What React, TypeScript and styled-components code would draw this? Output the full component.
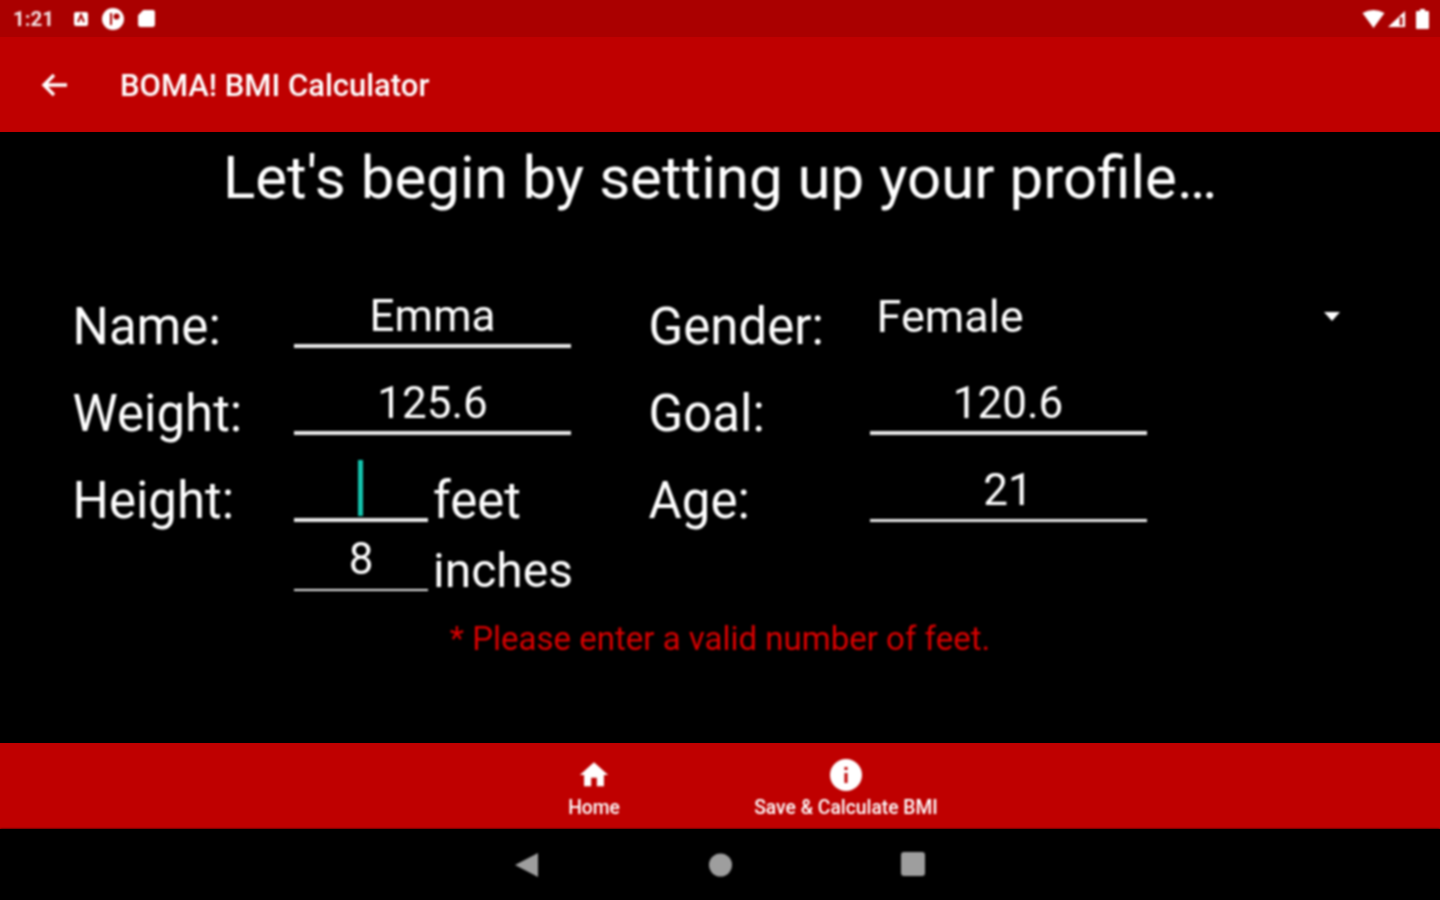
import React from "react";
import styled, { createGlobalStyle, css } from "styled-components";

const Global = createGlobalStyle`
  html, body { margin: 0; padding: 0; background: #000; }
  #root { width: 1440px; height: 900px; overflow: hidden; }
`;

const soft = css`
  filter: blur(0.8px);
`;

const Screen = styled.div`
  width: 1440px;
  height: 900px;
  display: flex;
  flex-direction: column;
  background: #000;
  color: #fff;
  font-family: Roboto, "Liberation Sans", sans-serif;
`;

const StatusBar = styled.div`
  height: 37px;
  background: #aa0000;
  display: flex;
  align-items: center;
  padding: 0 11px 0 13px;
  flex: none;
`;

const Clock = styled.span`
  ${soft}
  font-size: 20.5px;
  font-weight: 700;
  width: 60px;
  color: #f4e4e4;
`;

const StatusIcons = styled.div`
  ${soft}
  display: flex;
  align-items: center;
  gap: 12px;
`;

const Spacer = styled.div`
  flex: 1;
`;

const SystemIcons = styled.div`
  ${soft}
  display: flex;
  align-items: center;
  gap: 3px;
`;

const Battery = styled.svg`
  margin-left: 7px;
`;

const AppBar = styled.header`
  height: 95px;
  background: #bf0000;
  display: flex;
  align-items: center;
  padding-left: 40px;
  flex: none;
`;

const BackIcon = styled.svg`
  ${soft}
`;

const AppTitle = styled.h1`
  ${soft}
  margin: 2px 0 0 50px;
  font-size: 31px;
  font-weight: 500;
  color: #fff;
`;

const Content = styled.main`
  flex: 1;
  display: flex;
  flex-direction: column;
  min-height: 0;
`;

const Heading = styled.h2`
  ${soft}
  margin: 8px 0 0;
  height: 76px;
  line-height: 76px;
  text-align: center;
  font-size: 60px;
  font-weight: 400;
`;

const Form = styled.div`
  ${soft}
  margin: 62px 0 0 72.5px;
  display: grid;
  grid-template-columns: 221.5px 354.5px 221px 277px;
  grid-auto-rows: 87px;
`;

const Label = styled.div`
  font-size: 51px;
  line-height: 70px;
  height: 87px;
  padding-top: 14px;
  box-sizing: border-box;
`;

const Field = styled.div<{ $w: number; $line: number }>`
  width: ${(p) => p.$w}px;
  height: 70px;
  box-sizing: border-box;
  padding-top: 9px;
  border-bottom: ${(p) => p.$line}px solid #e8e8e8;
  text-align: center;
  font-size: 44px;
  line-height: 58px;
  position: relative;
  flex: none;
`;

const Caret = styled.span`
  position: absolute;
  left: 64px;
  bottom: 2px;
  width: 5px;
  height: 56px;
  background: #14c4ae;
`;

const HeightCell = styled.div`
  display: flex;
  flex-direction: column;
`;

const HeightRow = styled.div<{ $lift?: number }>`
  display: flex;
  align-items: flex-end;
  margin-top: ${(p) => -(p.$lift ?? 0)}px;
`;

const Unit = styled.span<{ $size: number; $drop: number }>`
  font-size: ${(p) => p.$size}px;
  line-height: 70px;
  margin-left: 5px;
  margin-bottom: ${(p) => -p.$drop}px;
`;

const Select = styled.div`
  width: 470px;
  height: 70px;
  display: flex;
  justify-content: space-between;
  align-items: flex-start;
  font-size: 45px;
  line-height: 60px;
  padding: 9px 0 0 7px;
  box-sizing: border-box;
`;

const Arrow = styled.span`
  width: 0;
  height: 0;
  margin: 25px 0 0;
  border-left: 8px solid transparent;
  border-right: 8px solid transparent;
  border-top: 9px solid #fff;
`;

const ErrorText = styled.p`
  ${soft}
  margin: 79px 0 0;
  text-align: center;
  color: #d80000;
  font-size: 33px;
  line-height: 42px;
`;

const BottomNav = styled.nav`
  height: 86px;
  background: #bf0000;
  display: flex;
  justify-content: center;
  flex: none;
`;

const NavItem = styled.div`
  ${soft}
  width: 252px;
  display: flex;
  flex-direction: column;
  align-items: center;
  padding-top: 15px;
  box-sizing: border-box;
`;

const NavLabel = styled.span`
  font-size: 19.3px;
  font-weight: 500;
  margin-top: 5px;
  line-height: 22px;
  white-space: nowrap;
`;

const SystemBar = styled.div`
  ${soft}
  height: 71px;
  background: #000;
  display: flex;
  align-items: center;
  justify-content: center;
  gap: 167px;
  flex: none;
`;

export default function App() {
  return (
    <Screen>
      <Global />
      <StatusBar>
        <Clock>1:21</Clock>
        <StatusIcons>
          <svg width="16" height="16" viewBox="0 0 16 16">
            <rect x="1" y="1" width="14" height="14" rx="2" fill="#fff" />
            <path d="M5 11 L8 4 L11 11" fill="none" stroke="#aa0000" strokeWidth="2" />
          </svg>
          <svg width="24" height="24" viewBox="0 0 24 24">
            <circle cx="12" cy="12" r="11" fill="#fff" />
            <rect x="9" y="6" width="2" height="12" fill="#aa0000" />
            <circle cx="15.5" cy="9.5" r="3" fill="#aa0000" />
          </svg>
          <svg width="19" height="19" viewBox="0 0 18 18">
            <path d="M6 1 H15 a2 2 0 0 1 2 2 V15 a2 2 0 0 1 -2 2 H3 a2 2 0 0 1 -2 -2 V6 Z" fill="#fff" />
          </svg>
        </StatusIcons>
        <Spacer />
        <SystemIcons>
          <svg width="23" height="18" viewBox="0 0 22 18">
            <path d="M0 3 Q11 -3 22 3 L11 18 Z" fill="#fff" />
          </svg>
          <svg width="18" height="18" viewBox="0 0 20 18">
            <path d="M19 0 V18 H0 Z" fill="#fff" />
            <rect x="13" y="7" width="3" height="9" fill="#aa0000" />
          </svg>
          <Battery width="13" height="20" viewBox="0 0 13 20">
            <path d="M4 0 H9 V2 H12 a1 1 0 0 1 1 1 V19 a1 1 0 0 1 -1 1 H1 a1 1 0 0 1 -1 -1 V3 a1 1 0 0 1 1 -1 H4 Z" fill="#fff" />
          </Battery>
        </SystemIcons>
      </StatusBar>
      <AppBar>
        <BackIcon width="30" height="30" viewBox="0 0 30 30">
          <path d="M27 15 H5 M14 5 L4 15 L14 25" fill="none" stroke="#fff" strokeWidth="3.4" />
        </BackIcon>
        <AppTitle>BOMA! BMI Calculator</AppTitle>
      </AppBar>
      <Content>
        <Heading>Let's begin by setting up your profile…</Heading>
        <Form>
          <Label>Name:</Label>
          <Field $w={277} $line={4}>Emma</Field>
          <Label>Gender:</Label>
          <Select>
            Female
            <Arrow />
          </Select>
          <Label>Weight:</Label>
          <Field $w={277} $line={4}>125.6</Field>
          <Label>Goal:</Label>
          <Field $w={277} $line={4}>120.6</Field>
          <Label>Height:</Label>
          <HeightCell>
            <HeightRow>
              <Field $w={134} $line={4}>
                <Caret />
              </Field>
              <Unit $size={51} $drop={14}>feet</Unit>
            </HeightRow>
            <HeightRow $lift={1}>
              <Field $w={134} $line={2}>8</Field>
              <Unit $size={48} $drop={15}>inches</Unit>
            </HeightRow>
          </HeightCell>
          <Label>Age:</Label>
          <Field $w={277} $line={3}>21</Field>
        </Form>
        <ErrorText>* Please enter a valid number of feet.</ErrorText>
      </Content>
      <BottomNav>
        <NavItem>
          <svg width="34" height="34" viewBox="0 0 24 24">
            <path d="M10 20v-6h4v6h5v-8h3L12 3 2 12h3v8z" fill="#fff" />
          </svg>
          <NavLabel>Home</NavLabel>
        </NavItem>
        <NavItem>
          <svg width="34" height="34" viewBox="0 0 34 34">
            <circle cx="17" cy="17" r="16" fill="#fff" />
            <rect x="15.5" y="15" width="3" height="10" fill="#bf0000" />
            <rect x="15.5" y="9" width="3" height="3" fill="#bf0000" />
          </svg>
          <NavLabel>Save &amp; Calculate BMI</NavLabel>
        </NavItem>
      </BottomNav>
      <SystemBar>
        <svg width="26" height="26" viewBox="0 0 26 26">
          <path d="M23 1 V25 L0 13 Z" fill="#9e9e9e" />
        </svg>
        <svg width="26" height="24" viewBox="0 0 26 24">
          <circle cx="12.5" cy="12" r="11.5" fill="#9e9e9e" />
        </svg>
        <svg width="25" height="26" viewBox="0 0 25 26">
          <rect x="0" y="0" width="24" height="24" rx="3" fill="#9e9e9e" />
        </svg>
      </SystemBar>
    </Screen>
  );
}
